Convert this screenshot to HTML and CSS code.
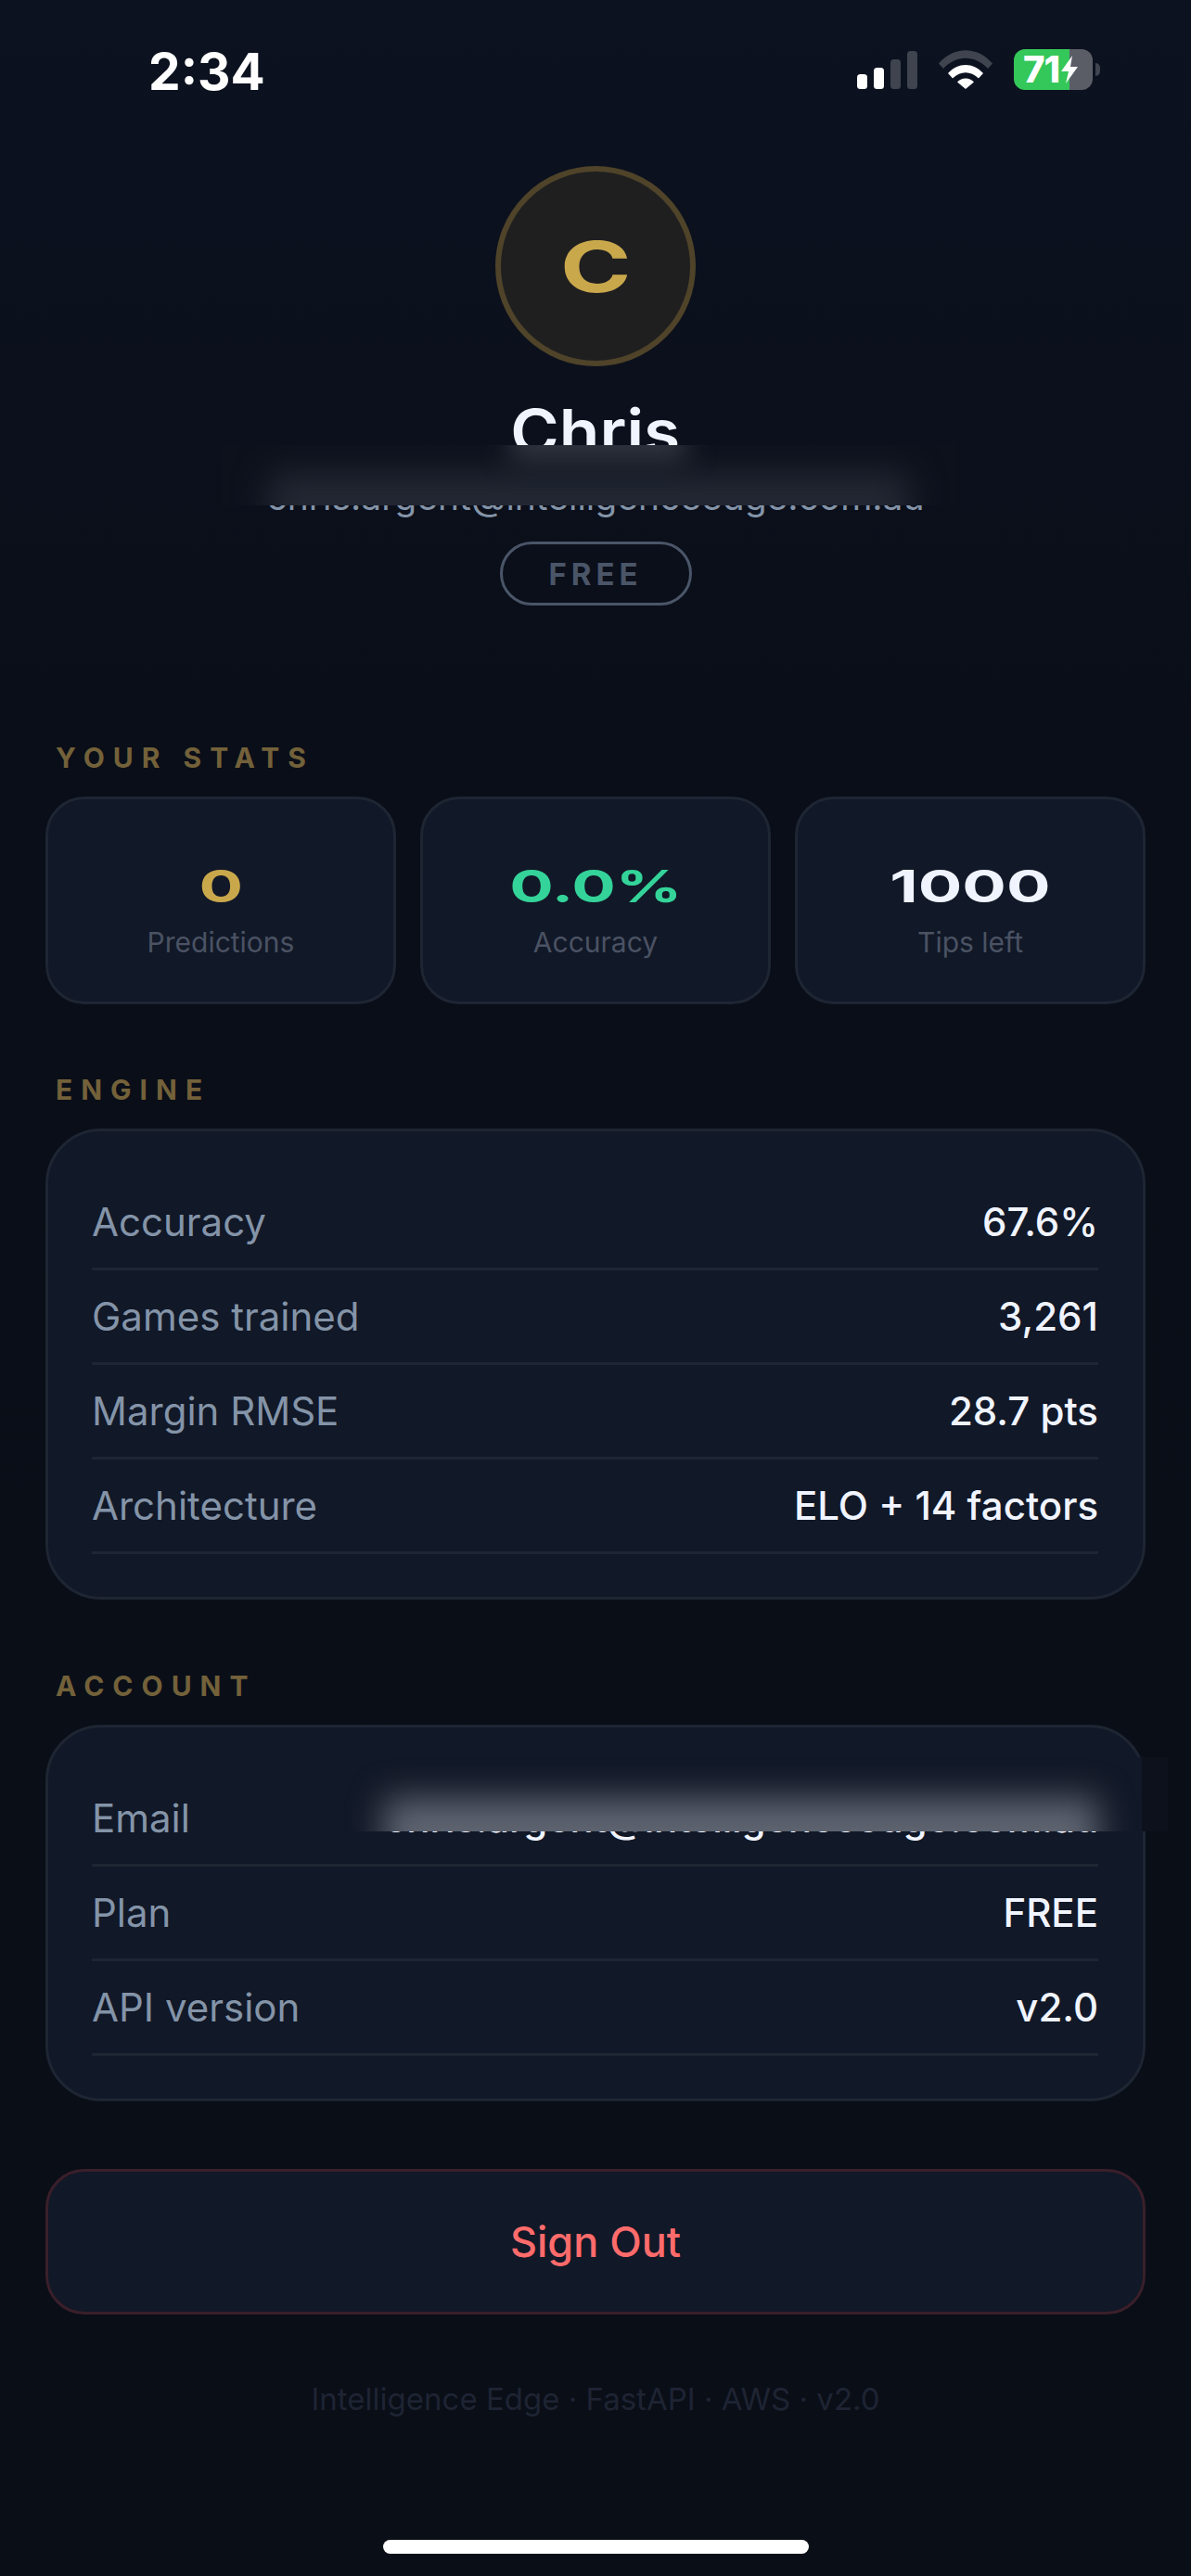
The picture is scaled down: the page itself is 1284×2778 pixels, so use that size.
FILE: index.html
```html
<!DOCTYPE html>
<html lang="en">
<head>
  <meta charset="UTF-8">
  <meta name="viewport" content="width=device-width, initial-scale=1.0">
  <title>Profile</title>
  <link rel="stylesheet" href="styles.css">
</head>
<body>

  <div class="status-bar">
    <span class="time">2:34</span>
    <div class="status-icons">
      <svg class="signal" width="65" height="41" viewBox="0 0 65 41">
        <rect x="0" y="25" width="11" height="16" rx="3.5" fill="#fff"/>
        <rect x="18" y="18" width="11" height="23" rx="3.5" fill="#fff"/>
        <rect x="36" y="9" width="11" height="32" rx="3.5" fill="#3f444f"/>
        <rect x="54" y="0" width="11" height="41" rx="3.5" fill="#3f444f"/>
      </svg>
      <svg class="wifi" width="58" height="42" viewBox="0 0 58 42">
        <path d="M0 14.5 C16 -4.5 42 -4.5 58 14.5 L53 20 C39 5 19 5 5 20 Z" fill="#3f444f"/>
        <path d="M10 25 C21 13 37 13 48 25 L43 30.5 C34 22 24 22 15 30.5 Z" fill="#fff"/>
        <path d="M20 34.5 C25 29 33 29 38 34.5 L29 42 Z" fill="#fff"/>
      </svg>
      <div class="battery">
        <div class="battery-body">
          <span class="battery-level">71</span>
          <svg class="bolt" width="20" height="30" viewBox="0 0 20 30">
            <path d="M13 0 L1 17 H9 L6 30 L19 12 H11 Z" fill="#fff"/>
          </svg>
        </div>
        <div class="battery-tip"></div>
      </div>
    </div>
  </div>

  <div class="profile">
    <div class="avatar"><span class="avatar-letter">C</span></div>
    <h1 class="name"><span class="name-text">Chris</span></h1>
    <p class="email">chris.argent@intelligenceedge.com.au</p>
    <span class="plan-pill">FREE</span>
    <div class="redact redact-profile">
      <div class="smudge smudge-name"></div>
      <div class="smudge smudge-email"></div>
    </div>
  </div>

  <main class="content">
    <h2 class="section-label section-first">YOUR STATS</h2>
    <div class="stats">
      <div class="stat-card">
        <span class="stat-value gold">0</span>
        <span class="stat-label">Predictions</span>
      </div>
      <div class="stat-card">
        <span class="stat-value green">0.0%</span>
        <span class="stat-label">Accuracy</span>
      </div>
      <div class="stat-card">
        <span class="stat-value">1000</span>
        <span class="stat-label">Tips left</span>
      </div>
    </div>

    <h2 class="section-label">ENGINE</h2>
    <div class="card">
      <div class="row"><span class="row-key">Accuracy</span><span class="row-val">67.6%</span></div>
      <div class="row"><span class="row-key">Games trained</span><span class="row-val">3,261</span></div>
      <div class="row"><span class="row-key">Margin RMSE</span><span class="row-val">28.7 pts</span></div>
      <div class="row"><span class="row-key">Architecture</span><span class="row-val">ELO + 14 factors</span></div>
    </div>

    <h2 class="section-label">ACCOUNT</h2>
    <div class="card">
      <div class="row">
        <span class="row-key">Email</span>
        <span class="row-val row-email">chris.argent@intelligenceedge.com.au</span>
        <div class="redact redact-account">
          <div class="smudge smudge-account"></div>
        </div>
      </div>
      <div class="row"><span class="row-key">Plan</span><span class="row-val">FREE</span></div>
      <div class="row"><span class="row-key">API version</span><span class="row-val">v2.0</span></div>
    </div>

    <button class="sign-out" type="button">Sign Out</button>
    <p class="footer">Intelligence Edge · FastAPI · AWS · v2.0</p>
  </main>

  <div class="home-indicator"></div>

</body>
</html>
```

FILE: styles.css
```css
* {
  box-sizing: border-box;
}

html, body {
  margin: 0;
  padding: 0;
}

body {
  position: relative;
  width: 1284px;
  height: 2778px;
  overflow: hidden;
  font-family: Inter, "Liberation Sans", sans-serif;
  background: linear-gradient(180deg, #0c1220 0%, #0a0e18 30%, #0a0e17 100%);
  color: #f0f4ff;
}

/* status bar */
.status-bar {
  display: flex;
  justify-content: space-between;
  align-items: flex-start;
  height: 152px;
  padding: 47px 98px 0 160px;
}

.time {
  font-size: 55px;
  font-weight: 700;
  line-height: 60px;
  color: #fff;
}

.status-icons {
  display: flex;
  align-items: flex-start;
  margin-top: 6px;
}

.signal {
  margin-top: 2px;
  margin-right: 23px;
}

.wifi {
  margin-top: 1px;
  margin-right: 23px;
}

.battery {
  display: flex;
  align-items: center;
}

.battery-body {
  display: flex;
  align-items: center;
  width: 85px;
  height: 44px;
  padding-left: 10px;
  border-radius: 12px;
  background: linear-gradient(90deg, #34c759 0, #34c759 60px, #5a5d66 60px);
}

.battery-level {
  font-size: 40px;
  font-weight: 800;
  line-height: 44px;
  letter-spacing: -1px;
  color: #fff;
}

.bolt {
  flex: none;
  margin-left: 1px;
}

.battery-tip {
  width: 5px;
  height: 14px;
  margin-left: 3px;
  border-radius: 0 7px 7px 0;
  background: #3f444f;
}

/* profile header */
.profile {
  position: relative;
  display: flex;
  flex-direction: column;
  align-items: center;
  padding-top: 27px;
}

.avatar {
  display: flex;
  align-items: center;
  justify-content: center;
  width: 216px;
  height: 216px;
  border: 6px solid #4f4329;
  border-radius: 50%;
  background: #1f1f20;
}

.avatar-letter {
  display: inline-block;
  font-size: 76px;
  font-weight: 700;
  color: #c9a84c;
  transform: scaleX(1.36);
}

.name {
  margin: 30px 0 0;
  font-size: 66px;
  font-weight: 600;
  line-height: 80px;
}

.name-text {
  display: inline-block;
  transform: scaleX(1.08);
}

.email {
  margin: 8px 0 0;
  font-size: 39px;
  line-height: 46px;
  color: #8494a8;
}

.plan-pill {
  display: flex;
  align-items: center;
  justify-content: center;
  width: 207px;
  height: 69px;
  margin-top: 25px;
  border: 3px solid #4a5568;
  border-radius: 35px;
  font-size: 33px;
  font-weight: 700;
  letter-spacing: 5px;
  color: #4a5568;
}

/* blurred-out bits of the screenshot */
.redact {
  position: absolute;
  overflow: hidden;
}

.redact-profile {
  top: 328px;
  left: 240px;
  width: 790px;
  height: 65px;
  background: #0c111c;
}

.redact-account {
  top: -16px;
  left: 270px;
  right: -75px;
  height: 80px;
  background: linear-gradient(90deg, #111827 0, #111827 862px, #0c111b 862px);
}

.smudge {
  position: absolute;
}

.smudge-name {
  top: -24px;
  left: 310px;
  width: 190px;
  height: 44px;
  background: #30343f;
  filter: blur(14px);
}

.smudge-email {
  top: 30px;
  left: 50px;
  width: 690px;
  height: 70px;
  background: #232833;
  filter: blur(18px);
}

.smudge-account {
  top: 44px;
  left: 45px;
  width: 770px;
  height: 80px;
  background: #5e6470;
  filter: blur(18px);
}

/* main content */
.content {
  padding: 0 49px;
}

.section-label {
  margin: 75px 0 24px;
  padding-left: 11px;
  font-size: 30px;
  font-weight: 700;
  line-height: 36px;
  letter-spacing: 9px;
  color: #73613a;
}

.section-first {
  margin-top: 146px;
}

.stats {
  display: grid;
  grid-template-columns: repeat(3, 1fr);
  gap: 26px;
}

.stats + .section-label {
  margin-top: 74px;
}

.stat-card {
  display: flex;
  flex-direction: column;
  align-items: center;
  justify-content: center;
  height: 224px;
  padding-top: 20px;
  border: 3px solid #1e2533;
  border-radius: 42px;
  background: #111827;
}

.stat-value {
  display: inline-block;
  font-size: 48px;
  font-weight: 700;
  line-height: 60px;
  transform: scaleX(1.47);
}

.gold {
  color: #c9a84c;
}

.green {
  color: #34d399;
}

.stat-label {
  margin-top: 10px;
  font-size: 30px;
  line-height: 40px;
  color: #4a5263;
}

.card {
  padding: 48px 48px 46px 47px;
  border: 3px solid #1e2533;
  border-radius: 60px;
  background: #111827;
}

.row {
  position: relative;
  display: flex;
  align-items: center;
  justify-content: space-between;
  height: 102px;
  border-bottom: 3px solid #1e2533;
  font-size: 42px;
}

.row-key {
  color: #8494a8;
}

.row-val {
  font-weight: 500;
  color: #f0f4ff;
}

.row-email {
  letter-spacing: -0.2px;
}

.sign-out {
  display: block;
  width: 100%;
  height: 157px;
  margin-top: 73px;
  border: 3px solid #3a1f2a;
  border-radius: 42px;
  background: #111827;
  font-family: inherit;
  font-size: 45px;
  font-weight: 500;
  color: #ff6b6b;
}

.footer {
  margin: 69px 0 0;
  font-size: 33px;
  line-height: 44px;
  text-align: center;
  color: #1e2433;
}

.home-indicator {
  position: absolute;
  left: 413px;
  bottom: 24px;
  width: 459px;
  height: 15px;
  border-radius: 8px;
  background: #fff;
}
```
